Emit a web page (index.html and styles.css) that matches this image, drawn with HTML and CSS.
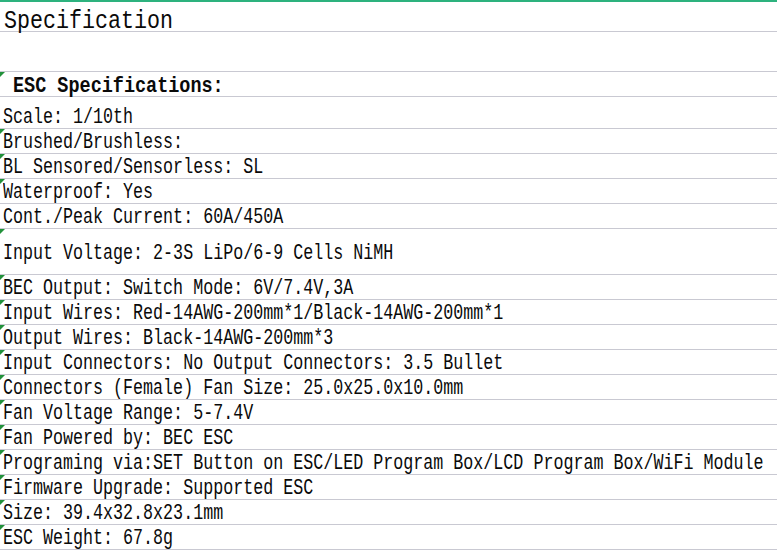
FILE: index.html
```html
<!DOCTYPE html>
<html lang="en">
<head>
<meta charset="utf-8">
<title>Specification</title>
<link rel="stylesheet" href="styles.css">
</head>
<body>
<div class="sheet">
  <div class="row row--title"><span class="txt txt--title">Specification</span></div>
  <div class="row row--blank"></div>
  <div class="row row--head mark"><span class="txt txt--head">ESC Specifications:</span></div>
  <div class="row row--scale"><span class="txt">Scale: 1/10th</span></div>
  <div class="row mark"><span class="txt">Brushed/Brushless:</span></div>
  <div class="row mark"><span class="txt">BL Sensored/Sensorless: SL</span></div>
  <div class="row mark"><span class="txt">Waterproof: Yes</span></div>
  <div class="row"><span class="txt">Cont./Peak Current: 60A/450A</span></div>
  <div class="row row--tall mark"><span class="txt">Input Voltage: 2-3S LiPo/6-9 Cells NiMH</span></div>
  <div class="row mark"><span class="txt">BEC Output: Switch Mode: 6V/7.4V,3A</span></div>
  <div class="row mark"><span class="txt">Input Wires: Red-14AWG-200mm*1/Black-14AWG-200mm*1</span></div>
  <div class="row mark"><span class="txt">Output Wires: Black-14AWG-200mm*3</span></div>
  <div class="row mark"><span class="txt">Input Connectors: No Output Connectors: 3.5 Bullet</span></div>
  <div class="row mark"><span class="txt">Connectors (Female) Fan Size: 25.0x25.0x10.0mm</span></div>
  <div class="row mark"><span class="txt">Fan Voltage Range: 5-7.4V</span></div>
  <div class="row mark"><span class="txt">Fan Powered by: BEC ESC</span></div>
  <div class="row mark"><span class="txt">Programing via:SET Button on ESC/LED Program Box/LCD Program Box/WiFi Module</span></div>
  <div class="row mark"><span class="txt">Firmware Upgrade: Supported ESC</span></div>
  <div class="row mark"><span class="txt">Size: 39.4x32.8x23.1mm</span></div>
  <div class="row mark"><span class="txt">ESC Weight: 67.8g</span></div>
</div>
</body>
</html>
```

FILE: styles.css
```css
html, body {
  margin: 0;
  padding: 0;
  background: #ffffff;
  overflow: hidden;
}

.sheet {
  width: 777px;
  overflow: hidden;
  border-top: 2px solid #2db27e;
  font-family: "Liberation Mono", "DejaVu Sans Mono", monospace;
  color: #0a0a0a;
}

.row {
  position: relative;
  display: flex;
  align-items: flex-end;
  height: 24px;
  padding-left: 3px;
  border-bottom: 1px solid #c9c9d2;
}

.mark::before {
  content: "";
  position: absolute;
  top: 0;
  left: 0;
  width: 0;
  height: 0;
  border-top: 5px solid #22913a;
  border-right: 5px solid transparent;
}

.txt {
  display: inline-block;
  white-space: pre;
  font-size: 22px;
  line-height: 21px;
  transform: scaleX(0.758);
  transform-origin: left center;
}

.row--title {
  height: 29px;
  padding-left: 4px;
}

.txt--title {
  font-size: 26px;
  line-height: 20px;
  transform: scaleX(0.833);
}

.row--blank {
  height: 39px;
}

.row--head {
  padding-left: 13px;
}

.txt--head {
  font-weight: bold;
  line-height: 18px;
  transform: scaleX(0.84);
}

.row--scale {
  height: 31px;
}

.row--tall {
  box-sizing: border-box;
  height: 46px;
  align-items: center;
  padding-top: 4px;
}
```
